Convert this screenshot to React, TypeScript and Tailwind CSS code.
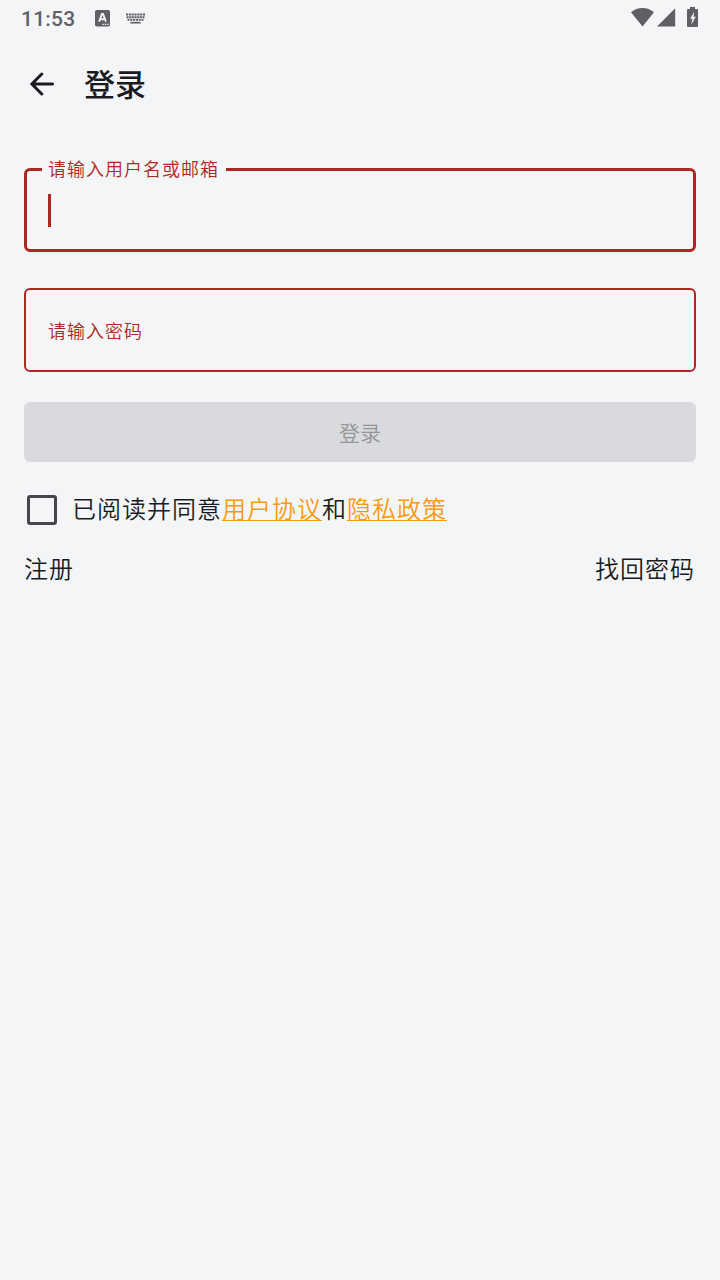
import { useState } from "react";

function StatusBar() {
  return (
    <div className="flex h-9 items-center pl-[21px] pr-[21px] text-[#5f6063]">
      <span className="pt-[2px] font-['Roboto',sans-serif] text-[21px] leading-9 font-medium tracking-[0.2px]">
        11:53
      </span>
      <svg className="ml-5 h-[17px] w-[15px]" viewBox="0 0 15 17" fill="none">
        <rect x="0" y="0" width="15" height="16.5" rx="1.8" fill="currentColor" />
        <path
          d="M4.1 11.8 6.9 4h1.200l2.800 7.800M5.200 9.300h4.600"
          stroke="#f4f5f7"
          strokeWidth="1.9"
        />
        <path d="M7.4 14.4h1.400M9.700 14.400h1.400M12 14.400h1.400" stroke="#f4f5f7" strokeWidth="1.3" />
      </svg>
      <svg className="ml-4 h-[11px] w-[19px]" viewBox="0 0 19 11" fill="none" stroke="currentColor">
        <path d="M0 1.5h19" strokeWidth="1.9" strokeDasharray="2.1 0.72" />
        <path d="M0.5 4.3h18" strokeWidth="1.9" strokeDasharray="2.1 0.55" />
        <path d="M1.5 6.9h16" strokeWidth="1.7" strokeDasharray="2.1 0.7" />
        <path d="M4.500 9.700h10" strokeWidth="1.700" />
      </svg>
      <div className="ml-auto flex items-center pb-[2px]">
        <svg className="h-[19px] w-[23px]" viewBox="0 0 23 19" fill="currentColor">
          <path d="M0 4.2C3.2 1.5 7.2 0 11.5 0S19.8 1.5 23 4.2L11.500 18.500z" />
        </svg>
        <svg className="ml-[3px] h-[19px] w-[19px]" viewBox="0 0 19 19" fill="currentColor">
          <path d="M18.200 0.300V18.500H0z" />
        </svg>
        <svg className="ml-[11px] h-5 w-[12px]" viewBox="0 0 12 20" fill="currentColor">
          <path d="M3 0h5v2H10Q11 2 11 3V19Q11 20 10 20H1Q0 20 0 19V3Q0 2 1 2H3z" />
          <path d="M7.200 4.800 3.200 11.700h2.100L4.400 17.500 8.800 9.800H6.500z" fill="#f4f5f7" />
        </svg>
      </div>
    </div>
  );
}

export default function App() {
  const [agreed, setAgreed] = useState(false);

  return (
    <div className="min-h-screen bg-[#f4f5f7] font-['Noto_Sans_CJK_SC',sans-serif] font-[350] text-[#1a1b1f]">
      <StatusBar />

      {/* 标题栏 */}
      <header className="flex h-24 items-center pl-[30px]">
        <button aria-label="返回">
          <svg
            className="size-6"
            viewBox="0 0 24 24"
            fill="none"
            stroke="currentColor"
            strokeWidth="3"
            strokeLinecap="round"
            strokeLinejoin="round"
          >
            <path d="M22.500 12H2M11.800 2 1.800 12l10 10" />
          </svg>
        </button>
        <h1 className="ml-[30px] pb-[3px] text-[31px] leading-10 font-medium">登录</h1>
      </header>

      <main className="flex flex-col px-6 pt-9">
        {/* 用户名 */}
        <div className="relative h-[84px] rounded-[6px] border-3 border-[#ac2821] px-[21px] pt-[23px]">
          <label className="absolute -top-4 left-[15px] h-[27px] w-[184px] bg-[#f4f5f7] pl-[6px] text-[18px] leading-[27px] tracking-[1px] whitespace-nowrap text-[#ac2821]">
            请输入用户名或邮箱
          </label>
          <div className="h-[33px] w-[3px] bg-[#ac2821]" />
        </div>

        {/* 密码 */}
        <div className="mt-9 flex h-[84px] items-center rounded-[6px] border-2 border-[#ac2821] px-[22px] text-[18px] leading-[27px] tracking-[1px] text-[#ac2821]">
          请输入密码
        </div>

        <button
          disabled
          className="mt-[30px] h-[60px] rounded-[6px] bg-[#d9dadd] pt-[2px] text-[21px] text-[#949599]"
        >
          登录
        </button>

        {/* 用户协议 */}
        <div className="mt-[30px] flex h-9 items-center pl-[3px]">
          <button
            role="checkbox"
            aria-checked={agreed}
            aria-label="同意协议"
            onClick={() => setAgreed(!agreed)}
            className="size-[30px] rounded-[3px] border-3 border-[#46474c]"
          />
          <p className="ml-[15px] pb-1 text-[24px] leading-9 tracking-[1px]">
            已阅读并同意
            <a className="text-[#fb990f] underline decoration-1 underline-offset-2">用户协议</a>
            和
            <a className="text-[#fb990f] underline decoration-1 underline-offset-2">隐私政策</a>
          </p>
        </div>

        <div className="mt-[22px] flex justify-between pr-px text-[24px] leading-9 tracking-[1px]">
          <a>注册</a>
          <a>找回密码</a>
        </div>
      </main>
    </div>
  );
}
